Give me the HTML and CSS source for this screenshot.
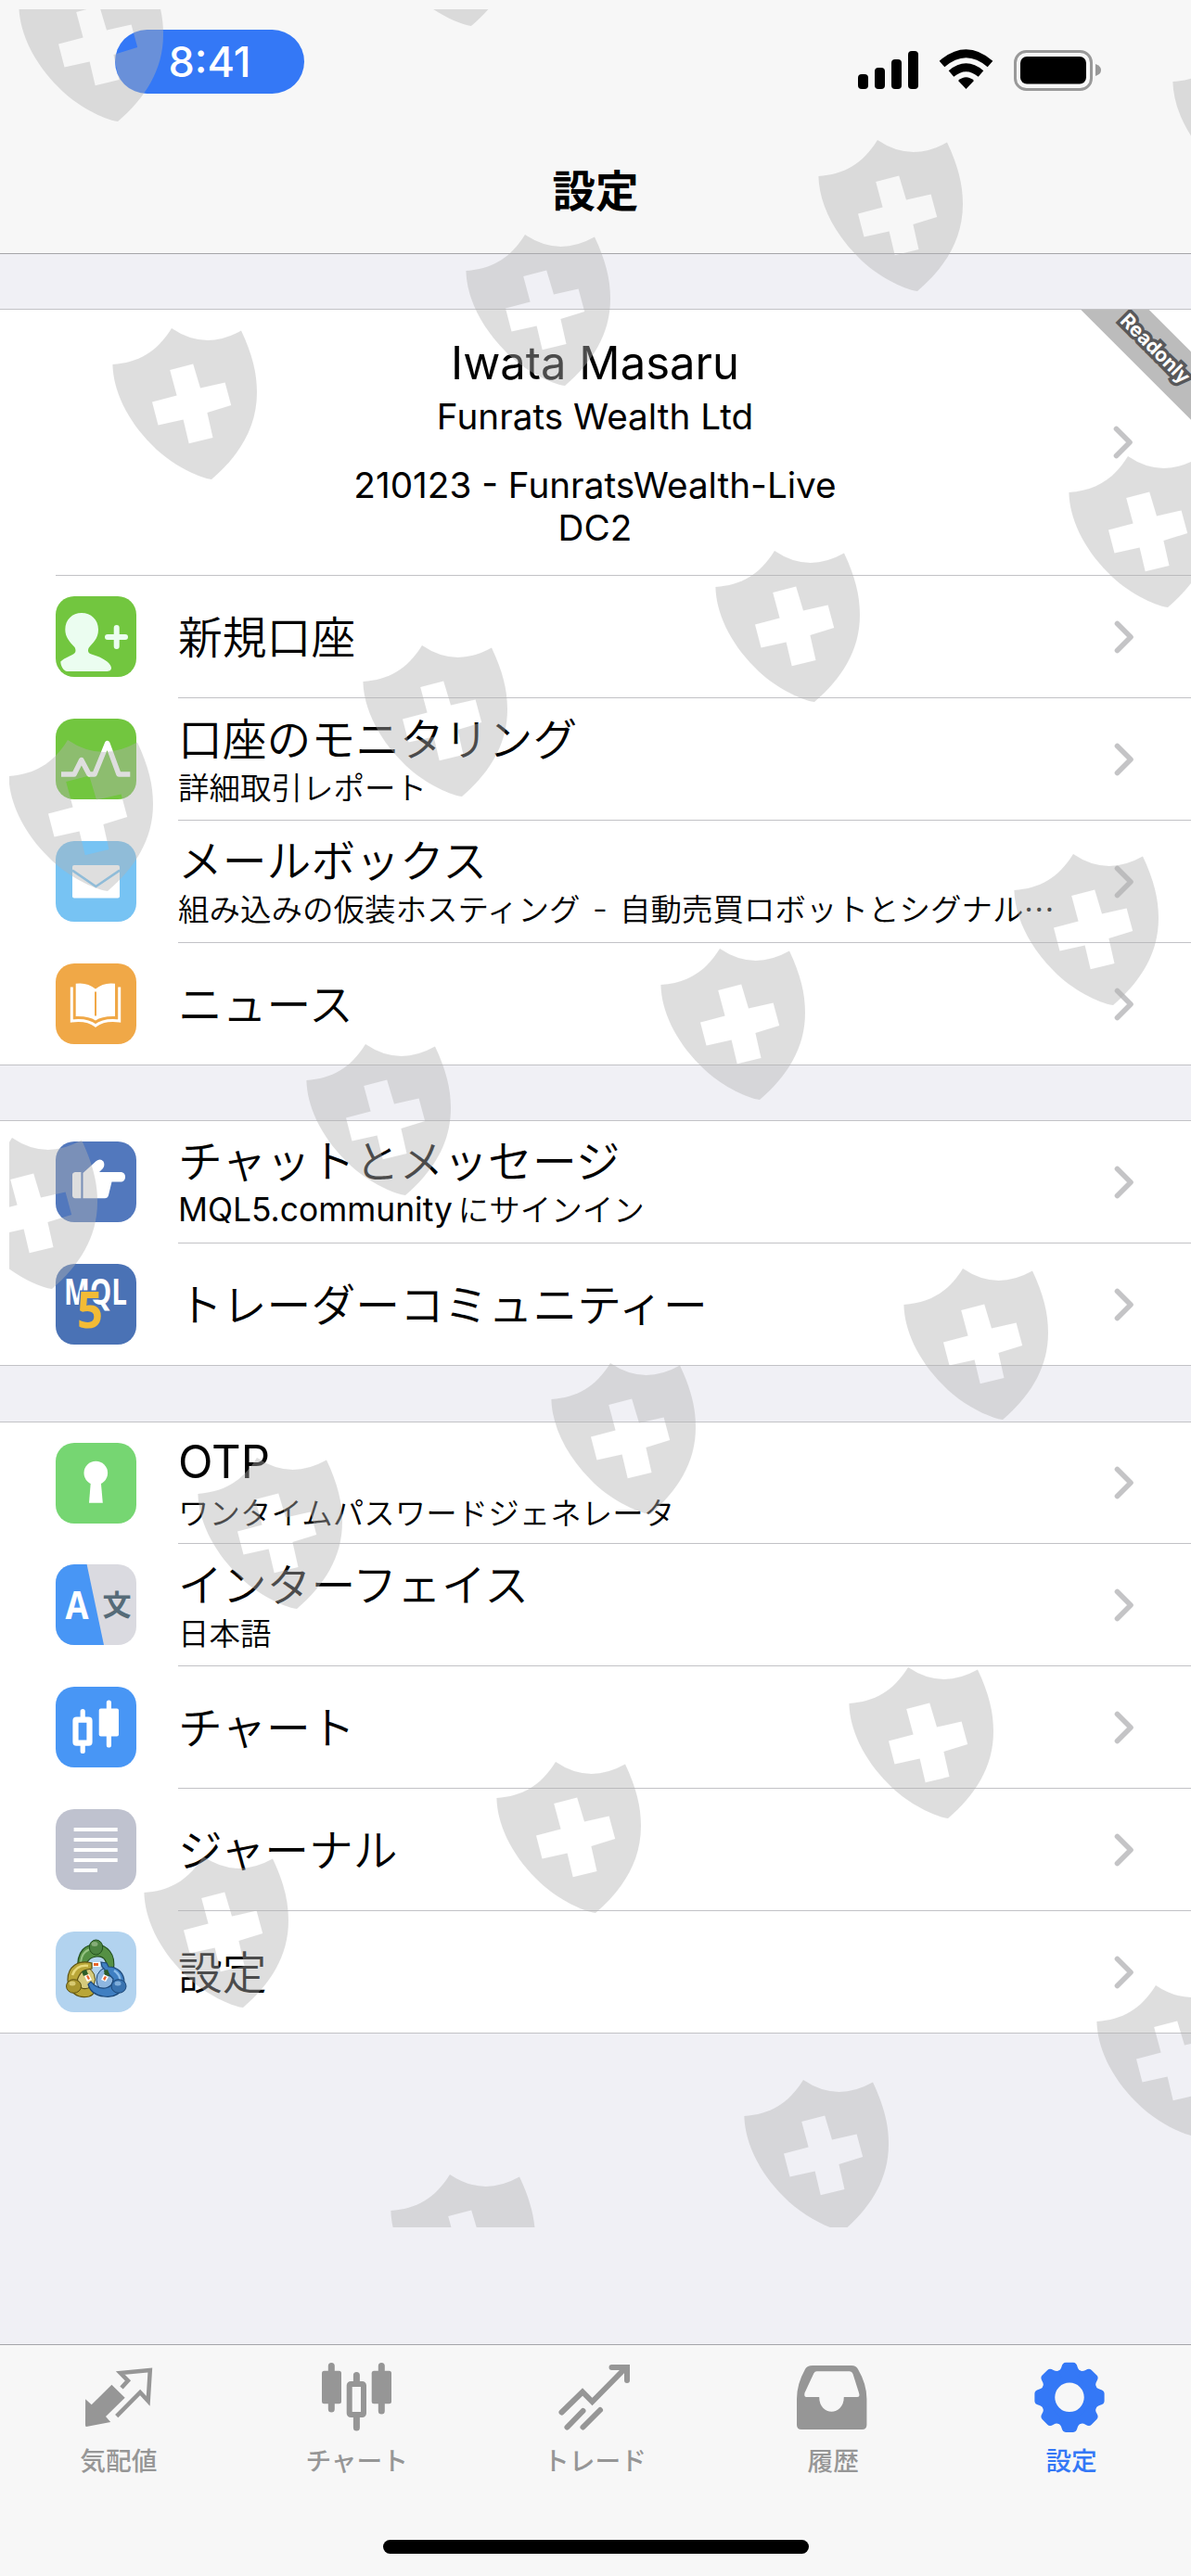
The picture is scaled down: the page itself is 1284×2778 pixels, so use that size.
FILE: index.html
```html
<!DOCTYPE html>
<html lang="ja">

<head>
    <meta charset="UTF-8">
    <meta name="viewport" content="width=device-width, initial-scale=1.0">
    <title>設定</title>
    <link rel="stylesheet" href="styles.css">
</head>

<body>
    <!-- shared shapes -->
    <svg class="defs" width="0" height="0">
        <symbol id="chevron" viewBox="0 0 22 36">
            <path d="M3.5 3.5 L18 18 L3.5 32.5" fill="none" stroke="#c4c4c6" stroke-width="5.6" stroke-linecap="round" stroke-linejoin="round" />
        </symbol>
        <path id="shield" fill-rule="evenodd" d="M64 0 Q100 24.5 139 2.5 C151 28 156 48 156 69 C156 108 136 138 107 163 C92 161 62 146 43 126 C15 98 1 66 .4 39 C28 37 48 26 64 0Z
            M62.2 44.9 L69.6 72.4 L43 79.6 L49.5 104.6 L76.6 98.5 L82.7 124.2 L108.5 118.1 L102.4 91 L128.2 83.1 L121.6 58.5 L95 64.6 L87.2 38.5Z" />
    </svg>

    <div class="screen">
        <header class="header">
            <div class="status">
                <div class="time">8:41</div>
                <svg class="status-icons" width="264" height="46" viewBox="0 0 264 46">
                    <rect x="1" y="27" width="11" height="16" rx="4" />
                    <rect x="19" y="20" width="11" height="23" rx="4" />
                    <rect x="37" y="11" width="11" height="32" rx="4" />
                    <rect x="55" y="2" width="11" height="41" rx="4" />
                    <g fill="none" stroke="#000" stroke-width="8.6">
                        <path d="M91.5 16 Q117.5 -6.5 143.5 16" />
                        <path d="M101.5 26.5 Q117.5 13 133.5 26.5" />
                    </g>
                    <path d="M109 34 Q117.5 26.5 126 34 L117.5 43Z" />
                    <rect x="170.5" y="2.5" width="82" height="41" rx="12" fill="none" stroke="#999" stroke-width="3" />
                    <rect x="176" y="8" width="71" height="29.5" rx="7" />
                    <path d="M257 16 Q263 18 263 22.5 Q263 27 257 29Z" fill="#999" />
                </svg>
            </div>
            <h1>設定</h1>
        </header>

        <main>
            <section class="group">
                <div class="profile">
                    <div class="profile-text">
                        <div class="name">Iwata Masaru</div>
                        <div class="company">Funrats Wealth Ltd</div>
                        <div class="account">210123 - FunratsWealth-Live<br>DC2</div>
                    </div>
                    <svg class="chevron"><use href="#chevron" /></svg>
                    <div class="ribbon">Readonly</div>
                </div>
                <div class="row">
                    <svg class="icon green" viewBox="0 0 87 87">
                        <path fill="#ebfdf0" d="M28 18 C38 18 46 25 46 36 C46 46 40 50 35.5 56 C34 60 36 62 40 63 C50 66 59 71 60 77 C60 80 58 81 54 81 H12 C8 80 5.5 75 5.3 70.5 C10 66 17 64 19 62.5 C22 61 22 58 20.5 55 C15 49 10.3 44 10.3 36 C10.3 25 18 18 28 18Z" />
                        <path d="M56 44 H75 M65.7 34 V54" stroke="#ebfdf0" stroke-width="6" stroke-linecap="round" />
                    </svg>
                    <div class="content">
                        <div class="text"><div class="title">新規口座</div></div>
                        <svg class="chevron"><use href="#chevron" /></svg>
                    </div>
                </div>
                <div class="row">
                    <svg class="icon green" viewBox="0 0 87 87">
                        <path d="M6 60 H20 L27.8 44.5 L36 60 H42 L55.7 26.5 L68 60 H80.3" fill="none" stroke="#fff" stroke-width="5.5" stroke-linejoin="round" />
                    </svg>
                    <div class="content">
                        <div class="text">
                            <div class="title">口座のモニタリング</div>
                            <div class="sub">詳細取引レポート</div>
                        </div>
                        <svg class="chevron"><use href="#chevron" /></svg>
                    </div>
                </div>
                <div class="row">
                    <svg class="icon sky" viewBox="0 0 87 87">
                        <rect x="18" y="26" width="51" height="35.5" rx="2" fill="#fff" />
                        <path d="M18 31.6 L43.4 49 L69 31.6" fill="none" stroke="#77c3f3" stroke-width="2.5" />
                    </svg>
                    <div class="content">
                        <div class="text">
                            <div class="title">メールボックス</div>
                            <div class="sub">組み込みの仮装ホスティング<span class="dash"> - </span>自動売買ロボットとシグナル…</div>
                        </div>
                        <svg class="chevron"><use href="#chevron" /></svg>
                    </div>
                </div>
                <div class="row">
                    <svg class="icon orange" viewBox="0 0 87 87">
                        <path d="M21.7 21.8 Q34 20 43 27.5 Q52 20 64 21.8 V57 Q50 56.5 43 61.5 Q36 56.5 21.7 57Z" fill="#fff" />
                        <path d="M43 30.5 V56.5" stroke="#f0a847" stroke-width="2" />
                        <path d="M17.3 25.5 V62 Q34 60 43 67 Q52 60 68.7 62 V25.5" fill="none" stroke="#fff" stroke-width="3" />
                    </svg>
                    <div class="content">
                        <div class="text"><div class="title">ニュース</div></div>
                        <svg class="chevron"><use href="#chevron" /></svg>
                    </div>
                </div>
            </section>

            <section class="group">
                <div class="row">
                    <svg class="icon navy" viewBox="0 0 87 87">
                        <path d="M21 33 H27.4 V61.3 H21 Q18 61 18 58 V36 Q18 33.5 21 33Z" fill="#fff" />
                        <path d="M29.5 34 L43.5 21.3 Q48 17.5 51.5 21.5 Q53.5 25.5 51 29 L47 33 H71 Q75 34 75 38 Q75 42.5 71 43.5 H60.5 L57 58 Q56 61.3 53 61.3 H29.5Z" fill="#fff" />
                    </svg>
                    <div class="content">
                        <div class="text">
                            <div class="title">チャットとメッセージ</div>
                            <div class="sub"><span class="latin">MQL5.community</span>にサインイン</div>
                        </div>
                        <svg class="chevron"><use href="#chevron" /></svg>
                    </div>
                </div>
                <div class="row">
                    <svg class="icon mql" viewBox="0 0 87 87">
                        <text x="9" y="44" class="mql-text" textLength="68" lengthAdjust="spacingAndGlyphs">MQL</text>
                        <text x="23" y="69" class="mql-five" textLength="28" lengthAdjust="spacingAndGlyphs">5</text>
                    </svg>
                    <div class="content">
                        <div class="text"><div class="title">トレーダーコミュニティー</div></div>
                        <svg class="chevron"><use href="#chevron" /></svg>
                    </div>
                </div>
            </section>

            <section class="group group-last">
                <div class="row">
                    <svg class="icon lime" viewBox="0 0 87 87">
                        <circle cx="43.3" cy="32.5" r="12.8" fill="#fff" />
                        <path d="M38 40 H48.6 L50.8 64.7 H36Z" fill="#fff" />
                    </svg>
                    <div class="content">
                        <div class="text">
                            <div class="title"><span class="latin-lg">OTP</span></div>
                            <div class="sub">ワンタイムパスワードジェネレータ</div>
                        </div>
                        <svg class="chevron"><use href="#chevron" /></svg>
                    </div>
                </div>
                <div class="row">
                    <svg class="icon lang" viewBox="0 0 87 87">
                        <path d="M0 0 H33.6 L52 87 H0Z" fill="#4896f5" />
                        <text x="23" y="59" class="lang-a" textLength="25" lengthAdjust="spacingAndGlyphs">A</text>
                        <text x="66" y="55" class="lang-b">文</text>
                    </svg>
                    <div class="content">
                        <div class="text">
                            <div class="title">インターフェイス</div>
                            <div class="sub">日本語</div>
                        </div>
                        <svg class="chevron"><use href="#chevron" /></svg>
                    </div>
                </div>
                <div class="row">
                    <svg class="icon blue" viewBox="0 0 87 87">
                        <path d="M29.2 26.5 V35 M29.2 61 V69.5 M57.4 17 V26 M57.4 50 V63" stroke="#fff" stroke-width="5.2" stroke-linecap="round" />
                        <rect x="21.5" y="35.7" width="15" height="25" rx="1" fill="none" stroke="#fff" stroke-width="6.2" />
                        <rect x="46.7" y="23.4" width="21.3" height="30" rx="2" fill="#fff" />
                    </svg>
                    <div class="content">
                        <div class="text"><div class="title">チャート</div></div>
                        <svg class="chevron"><use href="#chevron" /></svg>
                    </div>
                </div>
                <div class="row">
                    <svg class="icon gray" viewBox="0 0 87 87">
                        <path d="M19.6 22 H66.7 M19.6 33 H66.7 M19.6 44 H66.7 M19.6 55 H66.7 M19.6 66 H45" stroke="#fff" stroke-width="3.8" />
                    </svg>
                    <div class="content">
                        <div class="text"><div class="title">ジャーナル</div></div>
                        <svg class="chevron"><use href="#chevron" /></svg>
                    </div>
                </div>
                <div class="row">
                    <svg class="icon pale" viewBox="0 0 87 87">
                        <!-- three people holding hands -->
                        <circle cx="28.5" cy="51.5" r="14" fill="#d5ca7c" stroke="#5d5212" />
                        <circle cx="58" cy="52" r="14" fill="#8db6e0" stroke="#1d4878" />
                        <path d="M24 42 C22 20 33 14 43 14 C55 14 66 24 62 42 L59 48 L53 46 C58 32 52 26 44 27 C35 28 32 34 31 42Z" fill="#559044" stroke="#23501e" stroke-width="1.2" />
                        <path d="M27 36 C27 22 35 18 43 19" fill="none" stroke="#95c282" stroke-width="2" />
                        <path d="M39 34 C24 30 13 38 13 52 C13 65 24 73 36 70 C42 68 44 62 41 58 L35 61 C26 64 21 55 25 48 C28 42 32 41 39 40Z" fill="#b9a638" stroke="#5d5212" stroke-width="1.2" />
                        <path d="M18 47 C21 39 27 36 35 37" fill="none" stroke="#e8da7c" stroke-width="2.5" />
                        <path d="M49 33 L55 34 L57 38 C67 38 74 45 74 55 C73 66 63 72 52 70 C43 69 37 64 35 57 L38 54 L42 58 C51 64 62 61 62 51 L50 38Z" fill="#3f7fc2" stroke="#1d4878" stroke-width="1.2" />
                        <path d="M63 42 C69 46 70 50 69 54" fill="none" stroke="#8abceb" stroke-width="2.5" />
                        <path d="M28 43 L33 41 L35 46 L30 48Z M52 42 L56 41 L58 46 L53 47Z" fill="#2d5c28" />
                        <path d="M40 33 H48 V38 H40Z M31 48 L36 46 L39 52 L34 54Z M49 52 L52 46 L57 49 L54 54Z" fill="#fff" />
                        <path d="M41 34 H46 V37 H41Z M33 48 L35 47 L37 51 L35 52Z M51 51 L53 48 L55 49 L53 53Z" fill="#e8642c" />
                        <ellipse cx="43.5" cy="17" rx="7.2" ry="8" fill="#4c8341" stroke="#23501e" />
                        <ellipse cx="42" cy="13.5" rx="3.5" ry="2.5" fill="#85ad78" />
                        <ellipse cx="19.5" cy="59" rx="8" ry="7.3" fill="#a8962f" stroke="#5d5212" />
                        <ellipse cx="18" cy="56" rx="3.5" ry="2.5" fill="#d8ca72" />
                        <ellipse cx="68" cy="59" rx="8" ry="7.3" fill="#3973b0" stroke="#1d4878" />
                        <ellipse cx="67" cy="56" rx="3.5" ry="2.5" fill="#7faedb" />
                    </svg>
                    <div class="content">
                        <div class="text"><div class="title">設定</div></div>
                        <svg class="chevron"><use href="#chevron" /></svg>
                    </div>
                </div>
            </section>
        </main>

        <footer class="footer">
            <nav class="tabs">
                <div class="tab">
                    <svg viewBox="0 0 76 78">
                        <path d="M2.1 40.3 L8.7 46.3 L30.4 24.7 L44.7 38.7 L24 59 L29.2 65 L3 70 Q2 70 2 68Z" />
                        <path d="M35.7 58.7 L61.1 33 L69.7 42.3 L71.8 9 L39.8 12 L48 20.3 L41 28" fill="none" stroke="currentColor" stroke-width="4.5" />
                    </svg>
                    <span>気配値</span>
                </div>
                <div class="tab">
                    <svg viewBox="0 0 76 78">
                        <rect y="9.7" width="21" height="35.5" rx="2.5" />
                        <rect x="53.7" y="9.7" width="21.3" height="35.5" rx="2.5" />
                        <path d="M10.3 4.5 V51 M64.3 4.5 V53 M37.4 14.5 V22 M37.4 60 V71" stroke="currentColor" stroke-width="7" stroke-linecap="round" />
                        <rect x="29.7" y="24" width="15.3" height="33" rx="1.5" fill="none" stroke="currentColor" stroke-width="6" />
                    </svg>
                    <span>チャート</span>
                </div>
                <div class="tab">
                    <svg viewBox="0 0 76 78">
                        <g fill="none" stroke="currentColor" stroke-width="6" stroke-linecap="round">
                            <path d="M2.5 54.5 L25 32.5 L35.5 43 L71 7 M56.5 6 H73 V20" />
                            <path d="M8.5 70.5 L25.5 53 M25.5 70.5 L44 52" />
                        </g>
                    </svg>
                    <span>トレード</span>
                </div>
                <div class="tab">
                    <svg viewBox="0 0 76 78">
                        <path fill-rule="evenodd" d="M16 4 H58 Q63 4 65 8 Q74.4 24 74.4 40 V68 Q74.4 73 69.4 73 H4 Q-1 73 -1 68 V40 Q-1 24 8 8 Q10 4 16 4Z
                            M20.5 10.3 Q18.5 10.3 17.3 12.5 L7.5 33.5 Q6.5 38 9.5 38 H23.2 C23.2 59 49.8 59 49.8 38 H64 Q67.5 38 66 33.5 L59.5 13 Q58.5 10.3 56 10.3Z" />
                    </svg>
                    <span>履歴</span>
                </div>
                <div class="tab active">
                    <svg viewBox="0 0 76 78">
                        <g transform="translate(36 38.3)">
                            <circle r="23" fill="none" stroke="currentColor" stroke-width="14.5" />
                            <g id="teeth">
                                <path id="tooth" d="M-13 -28 Q-9.5 -29 -8.5 -33 Q-7.5 -37.6 -4 -37.6 H4 Q7.5 -37.6 8.5 -33 Q9.5 -29 13 -28 L8 -22 H-8Z" />
                                <use href="#tooth" transform="rotate(45)" />
                            </g>
                            <use href="#teeth" transform="rotate(90)" />
                            <use href="#teeth" transform="rotate(180)" />
                            <use href="#teeth" transform="rotate(270)" />
                        </g>
                    </svg>
                    <span>設定</span>
                </div>
            </nav>
            <div class="home-bar"></div>
        </footer>

        <!-- shield watermark over the whole screen -->
        <svg class="watermark" width="1274" height="2392" viewBox="10 10 1274 2392">
            <use href="#shield" x="20" y="-32" />
            <use href="#shield" x="401" y="-135" />
            <use href="#shield" x="1264" y="49" />
            <use href="#shield" x="882" y="151" />
            <use href="#shield" x="502" y="253" />
            <use href="#shield" x="121" y="354" />
            <use href="#shield" x="1152" y="492" />
            <use href="#shield" x="771" y="594" />
            <use href="#shield" x="391" y="696" />
            <use href="#shield" x="9" y="798" />
            <use href="#shield" x="1093" y="921" />
            <use href="#shield" x="712" y="1023" />
            <use href="#shield" x="330" y="1126" />
            <use href="#shield" x="-51" y="1227" />
            <use href="#shield" x="974" y="1368" />
            <use href="#shield" x="594" y="1470" />
            <use href="#shield" x="213" y="1572" />
            <use href="#shield" x="915" y="1798" />
            <use href="#shield" x="535" y="1900" />
            <use href="#shield" x="155" y="2002" />
            <use href="#shield" x="1182" y="2141" />
            <use href="#shield" x="802" y="2243" />
            <use href="#shield" x="421" y="2345" />
        </svg>
    </div>
</body>

</html>
```
FILE: styles.css
```css
* {
    box-sizing: border-box;
}

body {
    margin: 0;
    font-family: Inter, 'Noto Sans CJK JP', sans-serif;
    background-color: #f0f0f5;
    color: #000;
}

.defs {
    position: absolute;
}

.screen {
    position: relative;
    width: 1284px;
    height: 2778px;
    display: flex;
    flex-direction: column;
    overflow: hidden;
}

.header {
    height: 274px;
    background: #f7f7f7;
    border-bottom: 1px solid #a5a5a9;
}

.status {
    display: flex;
    justify-content: space-between;
    align-items: flex-start;
    padding: 32px 96px 0 124px;
}

.time {
    width: 204px;
    height: 69px;
    line-height: 70px;
    border-radius: 35px;
    background: #3478f6;
    color: #fff;
    font-size: 45px;
    font-weight: 500;
    text-align: center;
}

.status-icons {
    margin-top: 21px;
}

h1 {
    margin: 67px 0 0;
    font-family: 'Noto Sans CJK JP', sans-serif;
    font-size: 46.5px;
    font-weight: 700;
    line-height: 70px;
    text-align: center;
}

main {
    flex: 1;
}

.group {
    margin-top: 59px;
    background: #fff;
    border-top: 1px solid #c2c2c6;
}

.group-last {
    margin-top: 60px;
}

.profile {
    position: relative;
    height: 287px;
    margin-left: 60px;
    padding-right: 62px;
    display: flex;
    align-items: center;
    overflow: hidden;
    border-bottom: 1px solid #c2c2c6;
}

.profile-text {
    flex: 1;
    padding-left: 23px;
    text-align: center;
}

.name {
    font-size: 49px;
    line-height: 60px;
}

.company,
.account {
    font-size: 38.7px;
    line-height: 46px;
}

.company {
    margin-top: 4px;
}

.account {
    margin-top: 28px;
}

.ribbon {
    position: absolute;
    top: 15px;
    right: -69px;
    width: 220px;
    height: 52px;
    line-height: 50px;
    padding-left: 5px;
    transform: rotate(45deg);
    background: #bcbcbc;
    color: #fff;
    font-size: 21px;
    font-weight: 700;
    text-align: center;
    -webkit-text-stroke: 7px #58585a;
    paint-order: stroke fill;
}

.row {
    height: 132px;
    display: flex;
    align-items: center;
    padding-left: 60px;
    gap: 45px;
}

.group-last .row:first-child {
    height: 131px;
}

.icon {
    width: 87px;
    height: 87px;
    border-radius: 20px;
    flex: none;
    margin-bottom: 1px;
}

.content {
    flex: 1;
    height: 100%;
    display: flex;
    align-items: center;
    justify-content: space-between;
    padding-right: 61px;
    border-bottom: 1px solid #c2c2c6;
}

/* last separator runs edge to edge */
.row:last-child {
    border-bottom: 1px solid #c2c2c6;
}

.row:last-child .content {
    border-bottom: none;
}

.text {
    margin-bottom: 3px;
}

.title,
.sub {
    font-family: 'Noto Sans CJK JP', sans-serif;
    font-weight: 350;
    white-space: nowrap;
}

.title {
    font-size: 47.8px;
    line-height: 60px;
}

.sub {
    font-size: 33.5px;
    line-height: 44px;
    margin-top: 1px;
}

.latin {
    font-family: Inter, sans-serif;
    font-size: 35.4px;
    font-weight: 400;
    margin-right: 6px;
}

.latin-lg {
    font-family: Inter, sans-serif;
    font-size: 49px;
    font-weight: 400;
}

.dash {
    font-family: Inter, sans-serif;
    font-size: 36px;
    word-spacing: 3px;
}

.chevron {
    width: 22px;
    height: 36px;
    flex: none;
}

.green { background: #72c63f; }
.sky { background: #77c3f3; }
.orange { background: #f0a847; }
.navy { background: #5278bd; }
.mql { background: #4a72b5; }
.lime { background: #76d672; }
.lang { background: #dadae0; }
.blue { background: #4896f5; }
.gray { background: #bfc2cf; }
.pale { background: #b2d3ef; }

.mql-text {
    font: 700 39px 'Open Sans', sans-serif;
    fill: #fff;
}

.mql-five {
    font: 700 54px 'Open Sans', sans-serif;
    fill: #f3bb35;
    stroke: #4a72b5;
    stroke-width: 3px;
    paint-order: stroke;
}

.lang-a {
    font: 700 41px 'Open Sans', sans-serif;
    fill: #fff;
    text-anchor: middle;
}

.lang-b {
    font: 700 31px 'Noto Sans CJK JP', sans-serif;
    fill: #566b78;
    text-anchor: middle;
}

.footer {
    height: 250px;
    background: #f7f7f7;
    border-top: 1px solid #a5a5a9;
}

.tabs {
    height: 210px;
    display: flex;
}

.tab {
    flex: 1;
    display: flex;
    flex-direction: column;
    align-items: center;
    padding: 18px 1px 0 0;
    color: #969696;
    font-family: 'Noto Sans CJK JP', sans-serif;
    font-size: 27.7px;
    font-weight: 500;
    line-height: 40px;
}

.tab svg {
    width: 76px;
    height: 78px;
    margin-bottom: 7px;
    fill: currentColor;
    overflow: visible;
}

.tab.active {
    color: #3478f6;
}

.home-bar {
    width: 459px;
    height: 15px;
    margin: 0 auto;
    border-radius: 8px;
    background: #000;
}

.watermark {
    position: absolute;
    top: 10px;
    left: 10px;
    fill: #b3b3b3;
    opacity: 0.42;
    pointer-events: none;
}
```
